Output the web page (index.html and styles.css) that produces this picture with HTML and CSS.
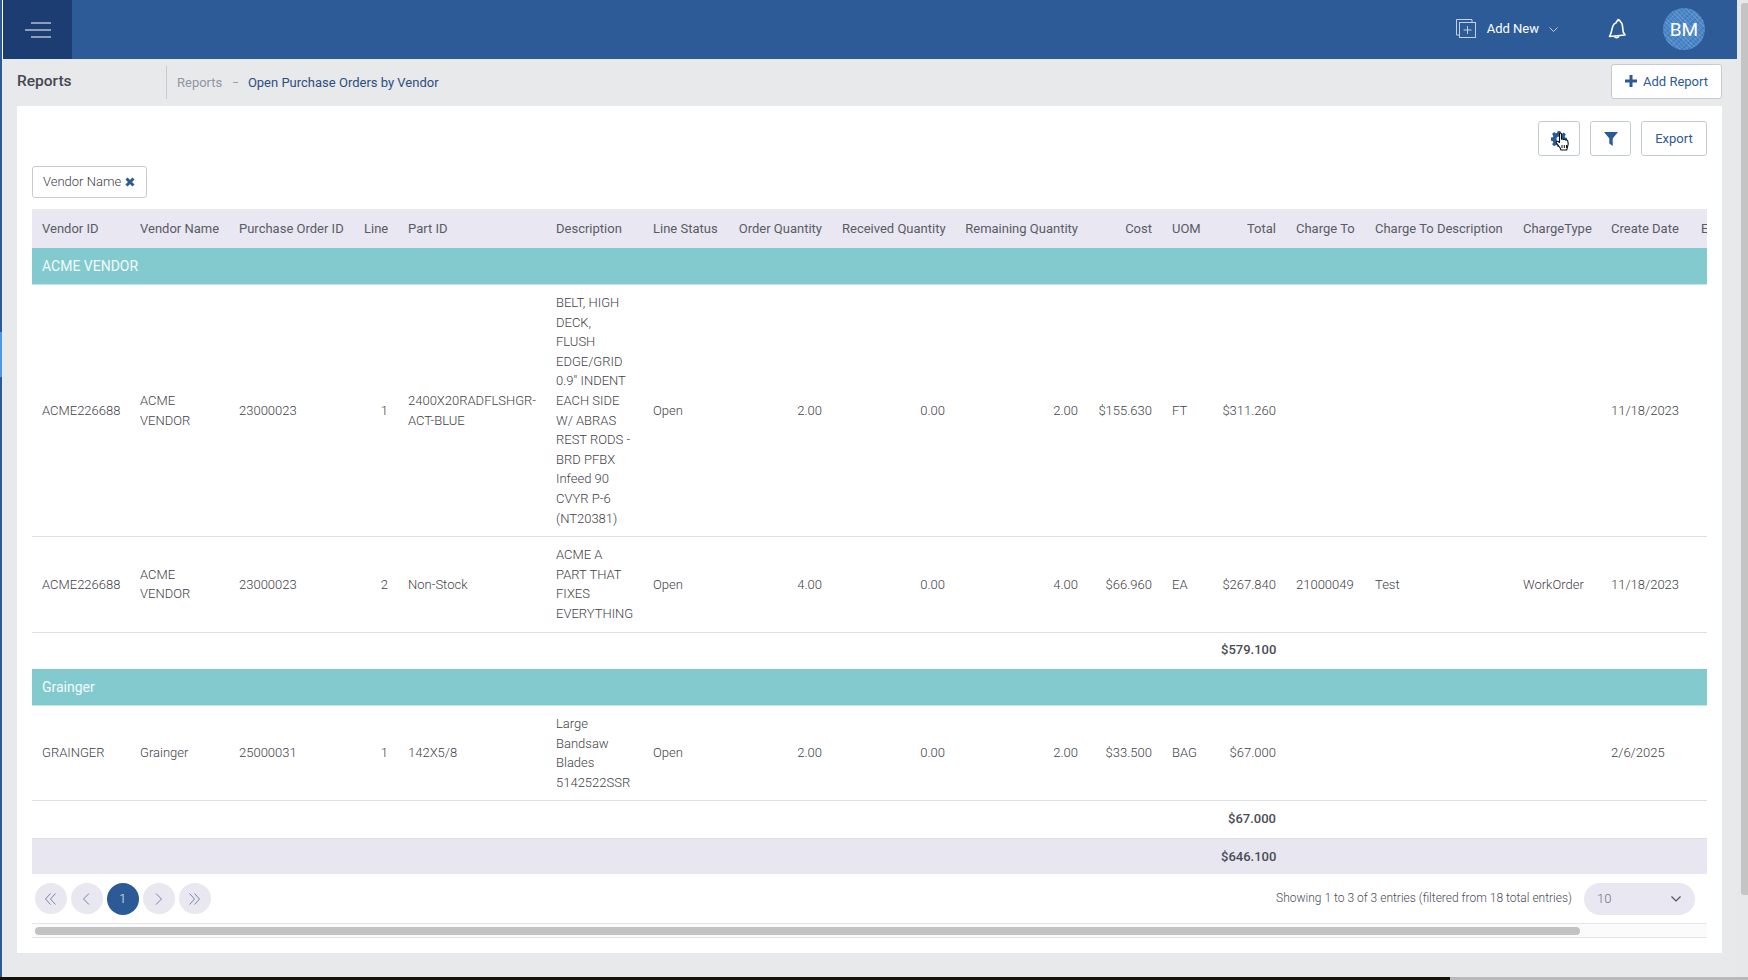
FILE: index.html
```html
<!DOCTYPE html>
<html lang="en">
<head>
<meta charset="utf-8">
<title>Open Purchase Orders by Vendor</title>
<link rel="stylesheet" href="styles.css">
</head>
<body>
<div class="window">
  <div class="edge"><div class="edge-mark"></div></div>
  <div class="page">
    <header class="topbar">
      <button class="menu-btn" aria-label="Menu">
        <svg width="26" height="16" viewBox="0 0 26 16"><path d="M6 1h20M0 8h26M6 15h20" stroke="#fff" stroke-width="1"/></svg>
      </button>
      <div class="top-actions">
        <div class="add-new">
          <svg width="20" height="19" viewBox="0 0 20 19" fill="none" stroke="#c3d0e2" stroke-width="1"><path d="M3.5 16H.5V.5H16v3"/><rect x="3.5" y="3.5" width="16" height="15"/><path d="M11.5 7v8M7.500 11h8"/></svg>
          <span>Add New</span>
          <svg class="add-chev" width="9" height="5" viewBox="0 0 9 5" fill="none" stroke="#c3d0e2"><path d="M.5.5l4 4 4-4"/></svg>
        </div>
        <svg class="bell" width="20" height="21" viewBox="0 0 20 21" fill="none" stroke="#fff" stroke-width="1.600" stroke-linejoin="round"><path d="M11 1.500c1.300 0 2 .9 2.200 1.900 1.300.9 2 2.200 2.200 4l.8 6.600 1.800 3-15.500 1.500 1.500-3.300 1.500-6.100c.6-2.200 1.700-3.600 3.600-4.300.2-1.300 1-2.300 2.400-2.300z"/><path d="M7.500 18.800c.8 1.100 3.400 1.200 4.400-.4"/></svg>
        <div class="avatar">BM</div>
      </div>
    </header>

    <div class="subheader">
      <h1 class="page-title">Reports</h1>
      <nav class="crumbs">
        <span class="crumb-muted">Reports</span>
        <span class="crumb-sep">–</span>
        <span class="crumb-current">Open Purchase Orders by Vendor</span>
      </nav>
      <button class="btn add-report">
        <svg width="12" height="12" viewBox="0 0 12 12"><path d="M6 0v12M0 6h12" stroke="#2c5a96" stroke-width="3"/></svg>
        Add Report
      </button>
    </div>

    <main class="card">
      <div class="toolbar">
        <button class="btn icon-btn gear-btn" aria-label="Settings">
          <svg width="16" height="16" viewBox="0 0 16 16"><path fill="#2c5a96" fill-rule="evenodd" d="M6.600 0h2.800l.4 2.100 1.300.6L12.900 1.500l2 2-1.200 1.800.5 1.300 2 .4v2.800l-2 .4-.5 1.300 1.200 1.800-2 2-1.800-1.200-1.300.5-.4 2.100H6.600l-.4-2.100-1.300-.5-1.800 1.200-2-2 1.200-1.800-.5-1.300-2-.4V6.600l2-.4.500-1.300-1.200-1.800 2-2 1.800 1.200 1.300-.6zM8 5.500a2.500 2.500 0 100 5 2.500 2.500 0 000-5z"/></svg>
          <svg class="hand" width="16" height="20" viewBox="0 0 16 20"><path fill="#fff" stroke="#111" stroke-width="1.100" stroke-linejoin="round" d="M4.500 1.500c.9-.8 2-.3 2 .8v5c.6-.6 1.700-.4 2 .3.600-.5 1.700-.3 2 .5.800-.4 2 0 2.300 1 .5 1.500.4 3.800-.2 5.400l-.8 3.500H6l-.8-2L1.500 11c-.7-1 .3-2.200 1.500-1.500l1.500 1z"/><path d="M7 13v3M9.300 13v3M11.500 13v3" stroke="#111" stroke-width="1"/></svg>
        </button>
        <button class="btn icon-btn filter-btn" aria-label="Filter">
          <svg width="14" height="14" viewBox="0 0 14 14"><path fill="#2c5a96" d="M0 0h14L8.700 6.500V14L5.300 11.500V6.500z"/></svg>
        </button>
        <button class="btn export-btn">Export</button>
      </div>

      <div class="chip">Vendor Name
        <svg width="10" height="10" viewBox="0 0 10 10"><path d="M1.500 1.500l7 7M8.500 1.500l-7 7" stroke="#2c5a96" stroke-width="3"/></svg>
      </div>

      <div class="table-wrap">
        <table class="report">
          <colgroup>
            <col class="c-vid"><col class="c-vname"><col class="c-po"><col class="c-line"><col class="c-part"><col class="c-desc"><col class="c-status"><col class="c-oq"><col class="c-rq"><col class="c-remq"><col class="c-cost"><col class="c-uom"><col class="c-total"><col class="c-cto"><col class="c-ctd"><col class="c-ctype"><col class="c-date"><col class="c-extra">
          </colgroup>
          <thead>
            <tr>
              <th>Vendor ID</th><th>Vendor Name</th><th>Purchase Order ID</th><th class="num">Line</th><th>Part ID</th><th>Description</th><th>Line Status</th><th class="num">Order Quantity</th><th class="num">Received Quantity</th><th class="num">Remaining Quantity</th><th class="num">Cost</th><th>UOM</th><th class="num">Total</th><th>Charge To</th><th>Charge To Description</th><th>ChargeType</th><th>Create Date</th><th>Expected Date</th>
            </tr>
          </thead>
          <tbody>
            <tr class="group"><td colspan="18">ACME VENDOR</td></tr>
            <tr>
              <td>ACME226688</td><td>ACME VENDOR</td><td>23000023</td><td class="num">1</td><td>2400X20RADFLSHGR-ACT-BLUE</td>
              <td>BELT, HIGH DECK, FLUSH EDGE/GRID 0.9" INDENT EACH SIDE W/ ABRAS REST RODS - BRD PFBX Infeed 90 CVYR P-6 (NT20381)</td>
              <td>Open</td><td class="num">2.00</td><td class="num">0.00</td><td class="num">2.00</td><td class="num">$155.630</td><td>FT</td><td class="num">$311.260</td><td></td><td></td><td></td><td>11/18/2023</td><td></td>
            </tr>
            <tr>
              <td>ACME226688</td><td>ACME VENDOR</td><td>23000023</td><td class="num">2</td><td>Non-Stock</td>
              <td>ACME A PART THAT FIXES EVERYTHING</td>
              <td>Open</td><td class="num">4.00</td><td class="num">0.00</td><td class="num">4.00</td><td class="num">$66.960</td><td>EA</td><td class="num">$267.840</td><td>21000049</td><td>Test</td><td>WorkOrder</td><td>11/18/2023</td><td></td>
            </tr>
            <tr class="subtotal"><td colspan="12"></td><td class="num">$579.100</td><td colspan="5"></td></tr>
            <tr class="group"><td colspan="18">Grainger</td></tr>
            <tr>
              <td>GRAINGER</td><td>Grainger</td><td>25000031</td><td class="num">1</td><td>142X5/8</td>
              <td>Large Bandsaw Blades 5142522SSR</td>
              <td>Open</td><td class="num">2.00</td><td class="num">0.00</td><td class="num">2.00</td><td class="num">$33.500</td><td>BAG</td><td class="num">$67.000</td><td></td><td></td><td></td><td>2/6/2025</td><td></td>
            </tr>
            <tr class="subtotal"><td colspan="12"></td><td class="num">$67.000</td><td colspan="5"></td></tr>
            <tr class="grand"><td colspan="12"></td><td class="num">$646.100</td><td colspan="5"></td></tr>
          </tbody>
        </table>
      </div>

      <div class="pager-row">
        <div class="pager">
          <button class="pg" aria-label="First"><svg width="11" height="12" viewBox="0 0 11 12" fill="none" stroke="#6f87a8"><path d="M5.500.5L.5 6l5 5.500M10.500.5L5.500 6l5 5.500"/></svg></button>
          <button class="pg" aria-label="Previous"><svg width="7" height="12" viewBox="0 0 7 12" fill="none" stroke="#6f87a8"><path d="M6 .5L.5 6 6 11.500"/></svg></button>
          <button class="pg pg-active">1</button>
          <button class="pg" aria-label="Next"><svg width="7" height="12" viewBox="0 0 7 12" fill="none" stroke="#6f87a8"><path d="M1 .5L6.500 6 1 11.500"/></svg></button>
          <button class="pg" aria-label="Last"><svg width="11" height="12" viewBox="0 0 11 12" fill="none" stroke="#6f87a8"><path d="M.5.5l5 5.500-5 5.500M5.500.5l5 5.500-5 5.500"/></svg></button>
        </div>
        <div class="page-info">Showing 1 to 3 of 3 entries (filtered from 18 total entries)</div>
        <div class="page-size"><span>10</span>
          <svg width="10" height="6" viewBox="0 0 10 6" fill="none" stroke="#4a4f58" stroke-width="1.100"><path d="M.5.500L5 5 9.500.5"/></svg>
        </div>
      </div>

      <div class="hscroll"><div class="hscroll-thumb"></div></div>
    </main>
  </div>
  <div class="vscroll"><div class="vscroll-thumb"></div></div>
</div>
<div class="desktop"><div class="desktop-dark"></div><div class="desktop-grey"></div></div>
</body>
</html>
```

FILE: styles.css
```css
* { box-sizing: border-box; }
html, body { margin: 0; height: 980px; overflow: hidden; }
body {
  display: flex;
  flex-direction: column;
  font-family: Roboto, "Liberation Sans", sans-serif;
  font-size: 13px;
  color: #4a4d55;
  background: #e6e8ea;
}
button { font-family: inherit; cursor: pointer; }

.window { display: flex; height: 977px; }
.edge { width: 2px; background: #2c5a96; }
.edge-mark { margin-top: 332px; height: 45px; background: #4a98ea; }
.page { width: 1735px; display: flex; flex-direction: column; background: linear-gradient(#dfe1e4, #e7e9eb 14px); }

.topbar {
  height: 59px;
  flex: none;
  display: flex;
  align-items: stretch;
  justify-content: space-between;
  background: #2d5b97;
}
.menu-btn {
  width: 70px;
  border: 0;
  border-left: 1px solid #fff;
  background: #1c3d72;
  padding: 0 0 0 22px;
  display: flex;
  align-items: center;
}
.menu-btn svg { margin-top: 1px; }
.top-actions { display: flex; align-items: center; padding-right: 32px; }
.add-new { display: flex; align-items: center; color: #fff; font-size: 13px; margin-bottom: 3px; }
.add-new span { margin-left: 11px; }
.add-chev { margin-left: 10px; margin-top: 2px; }
.bell { margin-left: 49px; margin-bottom: 3px; }
.avatar {
  width: 42px;
  height: 42px;
  margin-left: 36px;
  margin-bottom: 1px;
  border-radius: 50%;
  display: flex;
  align-items: center;
  justify-content: center;
  color: #fff;
  font-size: 19px;
  background-color: #4a86c8;
  background-image:
    repeating-linear-gradient(45deg, rgba(255,255,255,.13) 0 1px, transparent 1px 3px),
    repeating-linear-gradient(-45deg, rgba(20,60,120,.18) 0 1px, transparent 1px 4px);
}

.subheader { height: 47px; flex: none; display: flex; align-items: center; padding: 0 15px; }
.page-title { width: 150px; height: 33px; margin: 0; padding-top: 5px; font-size: 15.500px; line-height: 20px; font-weight: 500; color: #45484f; border-right: 1px solid #c8cacd; }
.crumbs { display: flex; align-items: center; gap: 10px; padding: 0 0 1px 10px; color: #2b4f80; }
.crumb-muted, .crumb-sep { color: #8f96a1; }
.crumb-sep { font-size: 10px; margin-right: -1px; }
.btn {
  border: 1px solid #c3cbd6;
  border-radius: 3px;
  background: #fff;
  color: #2c5a96;
  font-size: 13px;
  padding: 0;
}
.add-report {
  margin-left: auto;
  width: 111px;
  height: 35px;
  margin-top: -3px;
  display: flex;
  align-items: center;
  justify-content: center;
  gap: 6px;
}

.card { width: 1705px; height: 847px; margin-left: 15px; padding: 15px 15px 0; background: #fff; }
.toolbar { display: flex; justify-content: flex-end; height: 35px; }
.icon-btn { display: flex; align-items: center; justify-content: center; }
.gear-btn { width: 42px; position: relative; }
.hand { position: absolute; left: 16px; top: 10px; }
.filter-btn { width: 41px; margin-left: 10px; }
.export-btn { width: 66px; margin-left: 10px; }
.chip {
  width: 115px;
  height: 32px;
  margin-top: 10px;
  display: flex;
  align-items: center;
  gap: 4px;
  padding: 0 0 1px 10px;
  border: 1px solid #c9cbce;
  border-radius: 3px;
  font-weight: 300;
  color: #3f4248;
}

.table-wrap { width: 1675px; margin-top: 11px; overflow: hidden; }
.report { width: 1759px; table-layout: fixed; border-collapse: separate; border-spacing: 0; }
.c-vid { width: 98px; } .c-vname { width: 99px; } .c-po { width: 125px; } .c-line { width: 44px; }
.c-part { width: 148px; } .c-desc { width: 97px; } .c-status { width: 85px; } .c-oq { width: 104px; }
.c-rq { width: 123px; } .c-remq { width: 133px; } .c-cost { width: 74px; } .c-uom { width: 49px; }
.c-total { width: 75px; } .c-cto { width: 79px; } .c-ctd { width: 148px; } .c-ctype { width: 88px; }
.c-date { width: 90px; } .c-extra { width: 100px; }
.report th {
  height: 39px;
  padding: 0 10px;
  text-align: left;
  white-space: nowrap;
  overflow: hidden;
  font-weight: 400;
  color: #595c64;
  background: #e9e7f1;
}
.report td {
  padding: 8px 10px;
  line-height: 19.600px;
  font-weight: 300;
  color: #3f4248;
  vertical-align: middle;
  border-bottom: 1px solid #dfe0e2;
}
.report .num { text-align: right; }
.report .group td {
  height: 37px;
  padding: 2px 10px 0;
  font-size: 14px;
  font-weight: 400;
  color: #f2fbfb;
  background: #83cacf;
  border-bottom: 1px solid #c9e4e6;
}
.report .subtotal td { height: 36.500px; padding: 0 10px 2px; font-weight: 500; color: #4a4d55; border-bottom: 0; }
.report .grand td { height: 36px; padding: 0 10px; font-weight: 500; color: #4a4d55; background: #e8e6f0; border-top: 1px solid #dfe0e2; border-bottom: 0; }

.pager-row { height: 49px; display: flex; align-items: flex-start; padding: 9px 12px 0 2.500px; }
.pager { display: flex; align-items: center; gap: 4px; height: 32px; }
.pg { width: 32px; height: 31px; padding: 0; border: 0; border-radius: 50%; background: #e9e8f0; display: flex; align-items: center; justify-content: center; }
.pg-active { height: 32px; background: #2c5a96; color: #e8eef6; font-size: 13px; font-weight: 300; }
.page-info { margin-left: auto; height: 32px; line-height: 30px; font-size: 12px; font-weight: 300; color: #4a4d55; }
.page-size { width: 111px; height: 32px; margin-left: 12px; padding: 0 14px 0 13px; border-radius: 16px; background: #e9e7f1; display: flex; align-items: center; justify-content: space-between; font-weight: 300; color: #70747c; }

.hscroll { height: 15px; padding: 3px 0 0 3px; background: #fbfbfb; border-top: 1px solid #e6e6ea; border-bottom: 1px solid #e6e6ea; }
.hscroll-thumb { width: 1545px; height: 8px; border-radius: 4px; background: #c2c2c2; }

.vscroll { width: 11px; padding: 3px 0 0 4px; background: #e6e8ea; }
.vscroll-thumb { height: 892px; background: #c4c4c4; border-radius: 3px 0 0 3px; }

.desktop { height: 3px; display: flex; }
.desktop-dark { width: 1450px; background: #14120a; }
.desktop-grey { flex: 1; background: #b9b9bb; }
```
